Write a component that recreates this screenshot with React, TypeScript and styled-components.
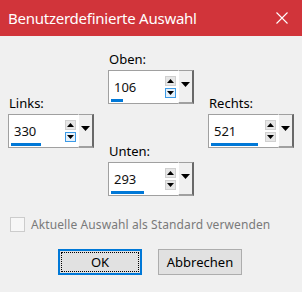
import React from "react";
import styled, { createGlobalStyle } from "styled-components";

const Global = createGlobalStyle`
  html, body { margin: 0; padding: 0; background: #f0f0f0; }
  body { font-family: "Noto Sans", "Open Sans", sans-serif; }
`;

const Window = styled.div`
  width: 302px;
  height: 292px;
  background: #f0f0f0;
  display: flex;
  flex-direction: column;
  overflow: hidden;
`;

const TitleBar = styled.div`
  height: 36px;
  background: #d1343a;
  display: flex;
  align-items: center;
  justify-content: space-between;
  padding: 0 14px 0 8px;
  color: #ffffff;
`;

const Title = styled.span`
  font-size: 15px;
  letter-spacing: -0.25px;
`;

const SpinGrid = styled.div`
  display: grid;
  grid-template-columns: 86px 86px 86px;
  column-gap: 14px;
  padding: 0 8px;
`;

const Column = styled.div<{ $top: number; $gap?: number }>`
  display: flex;
  flex-direction: column;
  padding-top: ${(p) => p.$top}px;
  gap: ${(p) => p.$gap ?? 0}px;
`;

const Group = styled.div`
  display: flex;
  flex-direction: column;
`;

const Label = styled.div`
  height: 18px;
  line-height: 18px;
  font-size: 13px;
  color: #000;
  margin-bottom: 2px;
  padding-left: 1px;
`;

const Spin = styled.div`
  display: flex;
  height: 34px;
`;

const Field = styled.div`
  position: relative;
  flex: 1;
  background: #fff;
  border: 1px solid #a0a0a0;
  border-right: none;
  display: flex;
  align-items: center;
  padding-left: 5px;
  padding-right: 2px;
`;

const Value = styled.span`
  flex: 1;
  font-size: 13px;
  color: #101010;
`;

const Arrows = styled.div`
  display: flex;
  flex-direction: column;
  gap: 2px;
`;

const ArrowBtn = styled.div<{ $hot?: boolean }>`
  width: 11px;
  height: 10px;
  box-sizing: border-box;
  border: 1px solid ${(p) => (p.$hot ? "#3c9ae6" : "#d0d0d0")};
  background: ${(p) => (p.$hot ? "#e5f1fb" : "#e6e6e6")};
  display: flex;
  align-items: center;
  justify-content: center;
`;

const Bar = styled.div`
  position: absolute;
  left: 2px;
  bottom: 1px;
  height: 3px;
  background: #0078d7;
`;

const Drop = styled.div`
  width: 16px;
  box-sizing: border-box;
  background: #f0f0f0;
  border-top: 1px solid #a0a0a0;
  border-left: 1px solid #ffffff;
  border-right: 2px solid #696969;
  border-bottom: 2px solid #a0a0a0;
  display: flex;
  align-items: center;
  justify-content: center;
  padding-bottom: 4px;
`;

const CheckRow = styled.div`
  display: flex;
  align-items: center;
  gap: 6px;
  padding: 20px 0 0 10px;
  height: 16px;
`;

const CheckBox = styled.div`
  width: 13px;
  height: 13px;
  border: 1px solid #cccccc;
  background: #f7f7f7;
`;

const CheckText = styled.span`
  font-size: 12px;
  letter-spacing: 0.1px;
  color: #7a7a7a;
`;

const ButtonRow = styled.div`
  display: flex;
  gap: 16px;
  padding: 17px 0 0 58px;
`;

const Button = styled.div<{ $def?: boolean }>`
  width: 84px;
  height: 26px;
  box-sizing: border-box;
  background: #e1e1e1;
  border: ${(p) => (p.$def ? "2px solid #0078d7" : "1px solid #adadad")};
  display: flex;
  align-items: center;
  justify-content: center;
  font-size: 13px;
  color: #000;
  position: relative;
  ${(p) =>
    p.$def
      ? `&::after { content: ""; position: absolute; inset: 1px; border: 1px dotted #000; }`
      : ""}
`;

const Up = () => (
  <svg width="7" height="4" viewBox="0 0 7 4">
    <path d="M0 4 L3.5 0 L7 4 Z" fill="#000" />
  </svg>
);
const Down = () => (
  <svg width="7" height="4" viewBox="0 0 7 4">
    <path d="M0 0 L7 0 L3.5 4 Z" fill="#000" />
  </svg>
);
const BigDown = () => (
  <svg width="9" height="5" viewBox="0 0 9 5">
    <path d="M0 0 L9 0 L4.5 5 Z" fill="#000" />
  </svg>
);

type SpinProps = { label: string; value: number; max: number; hot?: boolean };

const SpinBox = ({ label, value, max, hot }: SpinProps) => (
  <Group>
    <Label>{label}</Label>
    <Spin>
      <Field>
        <Value>{value}</Value>
        <Arrows>
          <ArrowBtn>
            <Up />
          </ArrowBtn>
          <ArrowBtn $hot={hot}>
            <Down />
          </ArrowBtn>
        </Arrows>
        <Bar style={{ width: Math.round((value / max) * 57) }} />
      </Field>
      <Drop>
        <BigDown />
      </Drop>
    </Spin>
  </Group>
);

export default function App() {
  return (
    <Window>
      <Global />
      <TitleBar>
        <Title>Benutzerdefinierte Auswahl</Title>
        <svg width="12" height="12" viewBox="0 0 12 12">
          <path d="M0.5 0.5 L11.5 11.5 M11.5 0.5 L0.5 11.5" stroke="#fff" strokeWidth="1.1" />
        </svg>
      </TitleBar>
      <SpinGrid>
        <Column $top={58}>
          <SpinBox label="Links:" value={330} max={627} hot />
        </Column>
        <Column $top={14} $gap={38}>
          <SpinBox label="Oben:" value={106} max={503} hot />
          <SpinBox label="Unten:" value={293} max={503} />
        </Column>
        <Column $top={58}>
          <SpinBox label="Rechts:" value={521} max={627} />
        </Column>
      </SpinGrid>
      <CheckRow>
        <CheckBox />
        <CheckText>Aktuelle Auswahl als Standard verwenden</CheckText>
      </CheckRow>
      <ButtonRow>
        <Button $def>OK</Button>
        <Button>Abbrechen</Button>
      </ButtonRow>
    </Window>
  );
}
